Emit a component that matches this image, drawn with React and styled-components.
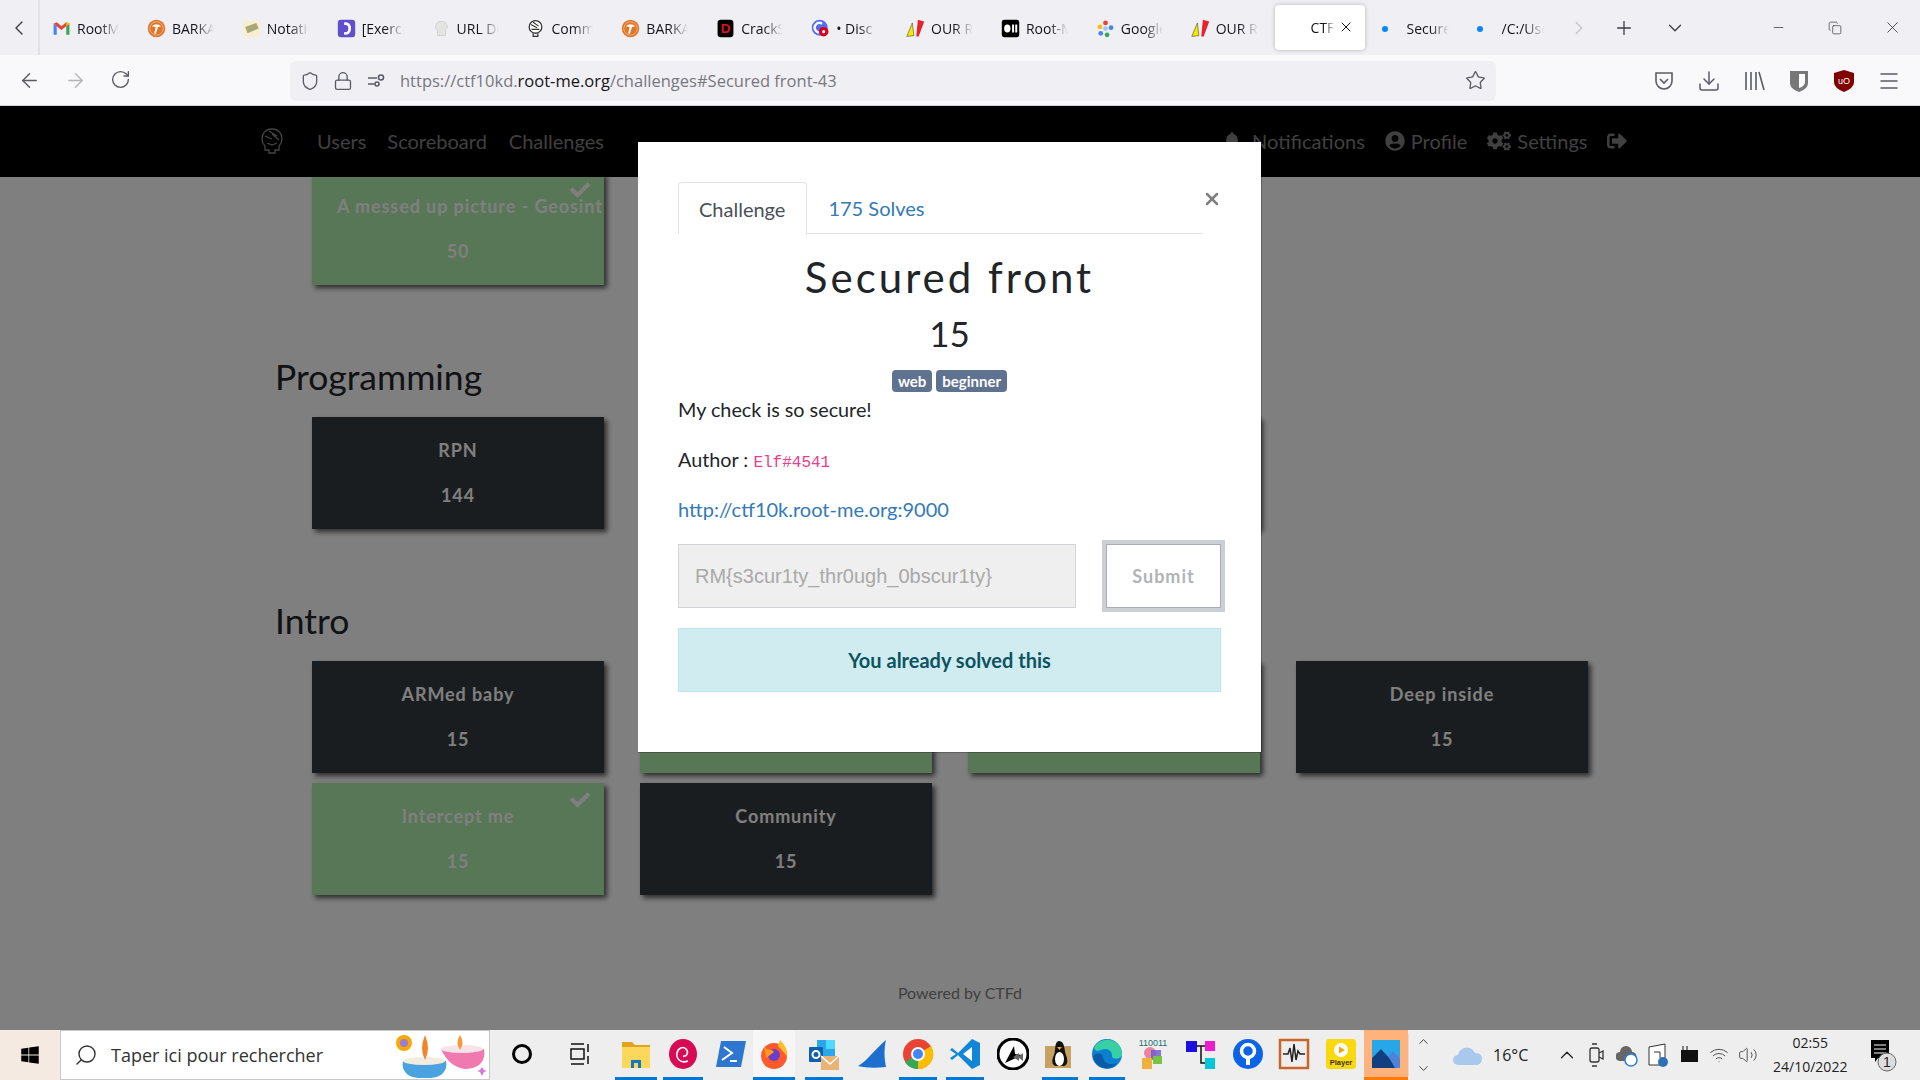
import React from 'react';
import styled, { createGlobalStyle } from 'styled-components';
import {
  ArrowLeft, ArrowRight, RotateCw, Shield, Lock, Star, Download, Menu, X, Plus,
  ChevronDown, ChevronLeft, ChevronRight, ChevronUp, Minus, Search, Copy, Volume2, Wifi,
} from 'lucide-react';
import { FaBell, FaUserCircle, FaCogs, FaSignOutAlt, FaCheck, FaWindows } from 'react-icons/fa';

const GlobalStyle = createGlobalStyle`
  html, body {
    margin: 0;
    padding: 0;
    overflow: hidden;
    background: #808080;
  }
  * { box-sizing: border-box; }
`;

const Screen = styled.div`
  width: 1920px;
  height: 1080px;
  display: flex;
  flex-direction: column;
  font-family: 'Open Sans', 'Liberation Sans', sans-serif;
`;

/* browser tabs */
const TabStrip = styled.div`
  height: 55px;
  flex: none;
  display: flex;
  align-items: center;
  background: #f0f0f4;
  color: #15141a;
`;

const StripButton = styled.div`
  flex: none;
  width: ${p => p.$w}px;
  display: flex;
  justify-content: center;
  align-items: center;
  color: ${p => p.$color || '#3a3a40'};
`;

const BackSlot = styled(StripButton)`
  height: 55px;
  border-right: 2px solid #e2e2e6;
  margin-right: 1px;
`;

const Tab = styled.div`
  flex: none;
  width: ${p => (p.$active ? 90 : p.$w || 94.9)}px;
  height: 45px;
  display: flex;
  align-items: center;
  gap: 6px;
  padding-left: ${p => (p.$active ? 36 : 11)}px;
  padding-top: ${p => (p.$active ? 0 : 2)}px;
  border-radius: 4px;
  position: relative;
  font-size: 14px;
  background: ${p => (p.$active ? '#fff' : 'transparent')};
  box-shadow: ${p => (p.$active ? '0 0 4px rgba(0,0,0,.25)' : 'none')};
`;

const TabLabel = styled.span`
  width: ${p => p.$w || 42}px;
  overflow: hidden;
  white-space: nowrap;
  mask-image: linear-gradient(to right, #000 55%, transparent 100%);
`;

const TabClose = styled(X)`
  position: absolute;
  right: 11px;
  top: 14px;
`;

const TabDot = styled.i`
  flex: none;
  width: 6px;
  height: 6px;
  margin: 0 13px 0 6px;
  border-radius: 50%;
  background: #0a84ff;
`;

const StripGap = styled.div`
  flex: ${p => (p.$grow ? 1 : 'none')};
  width: ${p => p.$w || 0}px;
`;

/* browser toolbar */
const Toolbar = styled.div`
  height: 51px;
  flex: none;
  display: flex;
  align-items: center;
  padding-top: 1px;
  background: #f9f9fb;
  border-bottom: 1px solid #d4d4d8;
  color: #5b5b66;
`;

const NavButtons = styled.div`
  width: 290px;
  flex: none;
  display: flex;
  gap: 23px;
  padding-left: 18px;
`;

const UrlBar = styled.div`
  width: 1206px;
  height: 40px;
  flex: none;
  display: flex;
  align-items: center;
  padding: 0 10px;
  border-radius: 6px;
  background: #f0f0f4;
`;

const UrlIcons = styled.div`
  display: flex;
  align-items: center;
  gap: 13px;
  margin-right: 14px;
`;

const UrlText = styled.div`
  flex: 1;
  font-size: 16.5px;
  white-space: nowrap;
  color: #77777f;

  b {
    font-weight: 400;
    color: #15141a;
  }
`;

const ToolIcons = styled.div`
  flex: 1;
  display: flex;
  justify-content: flex-end;
  align-items: center;
  gap: 21px;
  padding-right: 19px;
`;

/* the site below the modal */
const PageArea = styled.div`
  flex: 1;
  min-height: 0;
  position: relative;
  overflow: hidden;
  display: flex;
  flex-direction: column;
  background: #fff;
  font-family: Lato, 'Liberation Sans', sans-serif;
`;

const Navbar = styled.nav`
  height: 71px;
  flex: none;
  display: flex;
  align-items: center;
  padding: 0 0 2px 261px;
  background: #000;
  color: #808080;
  font-size: 20px;
`;

const NavLogo = styled.svg`
  width: 22px;
  height: 26px;
  margin-right: 34px;
`;

const NavLink = styled.span`
  display: flex;
  align-items: center;
  gap: 6px;
  margin-right: ${p => p.$gap ?? 21}px;
`;

const NavSpacer = styled.div`
  width: ${p => p.$w}px;
`;

const Scroller = styled.div`
  flex: 1;
  min-height: 0;
  overflow: hidden;
  padding-left: 275px;
`;

const CardGrid = styled.div`
  display: grid;
  grid-template-columns: repeat(4, 292px);
  column-gap: 36px;
  row-gap: 10px;
  padding-left: 37px;
  margin-top: ${p => p.$top || 0}px;
`;

const Heading = styled.h2`
  margin: 70px 0 19px;
  font-size: 35.5px;
  line-height: 43px;
  font-weight: 400;
  color: #212529;
`;

const Card = styled.div`
  height: 112px;
  position: relative;
  padding: 21px 25px 0;
  text-align: center;
  white-space: nowrap;
  font-size: 18px;
  font-weight: 700;
  letter-spacing: 0.9px;
  line-height: 24px;
  color: #fff;
  background: ${p => (p.$solved ? '#b0eeae' : '#343a40')};
  box-shadow: 3px 3px 5px rgba(0, 0, 0, 0.65);

  p {
    margin: 21px 0 0;
  }
`;

const CardCheck = styled(FaCheck)`
  position: absolute;
  top: 7px;
  right: 14px;
  width: 20px;
  height: 20px;
`;

const Footer = styled.div`
  margin: 86px 0 0 -275px;
  text-align: center;
  font-size: 16px;
  line-height: 24px;
  color: #808080;
`;

const Backdrop = styled.div`
  position: absolute;
  inset: 0;
  background: rgba(0, 0, 0, 0.5);
`;

const Modal = styled.div`
  position: absolute;
  left: 638px;
  top: 36px;
  width: 623px;
  height: 610px;
  padding: 40px 40px 0;
  background: #fff;
  color: #212529;
  font-size: 20px;
  box-shadow: 1px 0 0 rgba(0, 0, 0, 0.25), 0 1px 0 rgba(0, 0, 0, 0.25);
`;

const CloseButton = styled(X)`
  position: absolute;
  left: 564px;
  top: 47px;
  color: #7f7f7f;
`;

const ModalTabs = styled.div`
  width: 525px;
  height: 52px;
  display: flex;
  border-bottom: 1px solid #dee2e6;
`;

const ModalTab = styled.div`
  height: ${p => (p.$active ? 52 : 51)}px;
  padding: ${p => (p.$active ? '0 21px 0 20px' : '0 21px')};
  display: flex;
  align-items: center;
  color: ${p => (p.$active ? '#495057' : '#337ab7')};
  background: #fff;
  border: ${p => (p.$active ? '1px solid #dee2e6' : 'none')};
  border-bottom: none;
  border-radius: 4px 4px 0 0;
`;

const ChallengeName = styled.h3`
  margin: 19px 0 0;
  width: 543px;
  text-align: center;
  font-size: 42px;
  line-height: 49px;
  font-weight: 400;
  letter-spacing: 3px;
`;

const ChallengeValue = styled.div`
  margin-top: 7px;
  text-align: center;
  width: 543px;
  font-size: 35px;
  line-height: 48px;
`;

const Tags = styled.div`
  display: flex;
  justify-content: center;
  gap: 4px;
  margin-top: 13px;
`;

const Tag = styled.span`
  height: 22px;
  padding: 0 6px;
  border-radius: 4px;
  background: #5f7290;
  color: #fff;
  font-size: 15px;
  font-weight: 700;
  line-height: 22px;
`;

const Line = styled.p`
  margin: ${p => p.$top}px 0 0;
  font-size: 19.8px;
  line-height: 30px;
`;

const AuthorTag = styled.code`
  font-family: 'Liberation Mono', monospace;
  font-size: 16px;
  line-height: 1;
  color: #e83e8c;
`;

const Link = styled.a`
  color: #337ab7;
  font-size: 20px;
  text-decoration: none;
`;

const SubmitRow = styled.div`
  display: flex;
  gap: 30px;
  margin-top: 20px;
`;

const FlagInput = styled.input`
  width: 398px;
  height: 64px;
  padding: 0 16px;
  border: 1px solid #d3d4d7;
  border-radius: 0;
  background: #efefef;
  font-family: 'Liberation Sans', sans-serif;
  font-size: 20px;
  color: #a9a9a9;
`;

const SubmitButton = styled.button`
  width: 115px;
  height: 64px;
  margin-left: 0;
  padding-bottom: 2px;
  border: 1px solid #a8adb3;
  background: #fff;
  outline: 4px solid #ccd0d5;
  font-family: Lato, sans-serif;
  font-size: 18px;
  font-weight: 700;
  letter-spacing: 1px;
  color: #b1b3b5;
`;

const Notice = styled.div`
  width: 543px;
  height: 64px;
  margin-top: 20px;
  display: flex;
  justify-content: center;
  align-items: center;
  border: 1px solid #bee5eb;
  background: #d1ecf1;
  color: #0c5460;
  font-weight: 700;
`;

/* windows taskbar */
const Taskbar = styled.div`
  height: 50px;
  flex: none;
  display: flex;
  align-items: stretch;
  background: #eeeeee;
  color: #111;
`;

const StartButton = styled.div`
  width: 60px;
  flex: none;
  display: flex;
  justify-content: center;
  align-items: center;
  background: #f4eae1;
`;

const SearchBox = styled.div`
  width: 430px;
  flex: none;
  display: flex;
  align-items: center;
  gap: 13px;
  padding-left: 13px;
  background: #fff;
  border: 1px solid #c8c8c8;
  font-size: 18px;
  color: #333;
  position: relative;
`;

const SearchArt = styled.svg`
  position: absolute;
  right: 0;
  top: 2px;
  width: 98px;
  height: 46px;
`;

const AppSlot = styled.div`
  flex: none;
  width: ${p => p.$w || 44}px;
  margin-left: ${p => p.$gap || 0}px;
  display: flex;
  justify-content: center;
  align-items: center;
  background: ${p => (p.$bg ? p.$bg : 'transparent')};
  border-bottom: 3px solid ${p => p.$line || 'transparent'};
`;

const Tray = styled.div`
  flex: 1;
  display: flex;
  align-items: center;
  font-size: 16px;
  color: #222;
`;

const ScrollArrows = styled.div`
  width: 30px;
  display: flex;
  flex-direction: column;
  align-items: center;
  gap: 12px;
  border-left: 1px solid #ddd;
  color: #444;
`;

const TrayIcon = styled.span`
  display: flex;
  margin-left: ${p => p.$gap || 11}px;
`;

const Clock = styled.div`
  width: 80px;
  margin-left: 12px;
  text-align: center;
  font-size: 14px;
  line-height: 24px;
`;

const Favicon = ({ name }) => {
  const art = {
    gmail: <><path d="M2 20V6l4 3v11z" fill="#4285f4" /><path d="M22 20V6l-4 3v11z" fill="#34a853" /><path d="M2 6l10 8 10-8-4-2-6 5-6-5z" fill="#ea4335" /><path d="M18 9l4-3v-1l-4-1z" fill="#fbbc04" /></>,
    bark: <><circle cx="12" cy="12" r="11" fill="#e0762a" /><circle cx="12" cy="12" r="8.5" fill="none" stroke="#f5c08e" /><path d="M6 9q6-5 12 0l-4 1-3 9-2-1 2-8z" fill="#fff" /></>,
    note: <><rect x="1" y="2" width="22" height="20" fill="#f7f0d0" /><path d="M4 10l14-5 3 7-14 6z" fill="#a6a878" /></>,
    exercism: <><rect x="1" y="1" width="22" height="22" rx="4" fill="#604fcd" /><path d="M9 6q7-1 7 6t-7 6" fill="none" stroke="#fff" strokeWidth="3.5" /></>,
    chef: <path d="M7 14C2 10 5 3 12 3s10 7 5 11v7H7z" fill="#e4e4e4" stroke="#ccc" />,
    skull: <><circle cx="12" cy="10" r="8" fill="#fff" stroke="#333" strokeWidth="1.6" /><path d="M6 7l8 4M9 4l7 5M7 13h10M9 18v4h6v-4" fill="none" stroke="#333" strokeWidth="1.5" /></>,
    crack: <><rect x="2" y="1" width="20" height="22" rx="4" fill="#000" /><text x="12" y="18" textAnchor="middle" fontSize="17" fontWeight="700" fontFamily="Liberation Sans" fill="#e0101a">D</text></>,
    discord: <><circle cx="11" cy="11" r="10" fill="#4f6ef0" /><path d="M14 6a6 6 0 100 10" fill="none" stroke="#fff" strokeWidth="3" /><circle cx="16" cy="16" r="6" fill="#d8001c" /><circle cx="16" cy="16" r="2" fill="#fff" /></>,
    our: <><path d="M1 22L8 5l2 16z" fill="#f8e800" stroke="#222" strokeWidth=".6" /><path d="M13 22l2-21 8 2-7 19z" fill="#e8222a" /></>,
    root: <><rect x="1" y="1" width="22" height="22" rx="3" fill="#000" /><ellipse cx="8" cy="12" rx="4" ry="5" fill="#fff" /><rect x="14" y="7" width="2.5" height="10" fill="#fff" /><rect x="18" y="7" width="2.5" height="10" fill="#fff" /></>,
    lens: <><circle cx="12" cy="5" r="3" fill="#ea4335" /><circle cx="5" cy="10" r="3" fill="#fbbc04" /><circle cx="6" cy="18" r="3" fill="#4285f4" /><circle cx="14" cy="20" r="3" fill="#34a853" /><circle cx="19" cy="11" r="3" fill="#4285f4" /><circle cx="12" cy="12" r="3" fill="#a3c4f3" /></>,
  };
  return <svg width="19" height="19" viewBox="0 0 24 24" style={{ flex: 'none' }}>{art[name]}</svg>;
};

const AppIcon = ({ name }) => {
  const art = {
    folder: <><path d="M2 4h10l3 3h15v6H2z" fill="#e2a21b" /><rect x="2" y="9" width="28" height="21" fill="#fbd75b" /><path d="M11 30v-8h10v8h-3v-5h-4v5z" fill="#1478c8" /></>,
    debian: <><ellipse cx="16" cy="16" rx="14" ry="15" fill="#d70a53" /><path d="M21 23c-8 3-12-3-11-8s6-7 9-4 1 8-3 7" fill="none" stroke="#fff" strokeWidth="1.6" /></>,
    shell: <><path d="M6 3h25l-5 26H1z" fill="#2e77d0" /><path d="M9 9l8 6-10 7M15 23h7" fill="none" stroke="#fff" strokeWidth="2" /></>,
    firefox: <><circle cx="16" cy="18" r="13" fill="#ff5a2c" /><path d="M22 2c5 5 8 10 7 16L20 8z" fill="#ffbd2e" /><circle cx="16" cy="17" r="6" fill="#6a3ec8" /><path d="M6 8c3 6 8 2 10 6l-8 6z" fill="#ff9a1f" /></>,
    outlook: <><rect x="9" y="2" width="18" height="18" fill="#28a8ea" /><rect x="18" y="2" width="9" height="9" fill="#50d9ff" /><rect x="1" y="9" width="14" height="15" rx="1" fill="#0f5fb0" /><circle cx="8" cy="16.500" r="3.500" fill="none" stroke="#fff" strokeWidth="2" /><rect x="13" y="18" width="18" height="14" fill="#e9b376" /><path d="M13 18l9 8 9-8" fill="none" stroke="#fff" strokeWidth="1.500" /></>,
    shark: <path d="M2 28C10 24 20 10 30 2c-2 8-2 18 0 27C20 30 10 30 2 28z" fill="#1c6fce" />,
    chrome: <><circle cx="16" cy="16" r="15" fill="#ea4335" /><path d="M16 16L3 24a15 15 0 0013 7z" fill="#34a853" /><path d="M16 16l13-8a15 15 0 01-13 23z" fill="#fbbc04" /><circle cx="16" cy="16" r="7" fill="#fff" /><circle cx="16" cy="16" r="5" fill="#4285f4" /></>,
    vscode: <><path d="M23 1l8 4v22l-8 4L9 17 3 22l-2-2 6-4-6-4 2-2 6 5z" fill="#0f86d8" /><path d="M23 9v14l-9-7z" fill="#fff" /></>,
    stremio: <><circle cx="16" cy="16" r="15" fill="#fff" stroke="#000" strokeWidth="3" /><path d="M8 25l9-17 1 8 7 1z" fill="#000" /><path d="M16 19l6-4v8zM21 19l5-4v8z" fill="#666" /></>,
    linux: <><rect x="1" y="8" width="26" height="22" fill="#c6a15f" /><path d="M15 3c6 0 5 9 7 14s2 10-2 11h-8c-5-1-4-7-2-11s0-14 5-14z" fill="#111" /><ellipse cx="15.500" cy="21" rx="4.500" ry="7" fill="#fff" /><path d="M13 9h5l-2.500 3z" fill="#f5a623" /></>,
    edge: <><circle cx="16" cy="16" r="15" fill="#0c7fd0" /><path d="M3 10C8-2 30-2 31 16c0 5-8 6-10 3 1-6-5-10-11-7-3 1-5 2-7-2z" fill="#37d0a4" /><path d="M12 20c1 5 8 8 14 5-6 9-22 6-24-6 2-4 9-6 10 1z" fill="#0a5ca8" /></>,
    binary: <><text x="16" y="8" textAnchor="middle" fontSize="9" fontFamily="Liberation Sans" fill="#1c6d6d">110011</text><circle cx="13" cy="15" r="6" fill="#e884a0" /><rect x="14" y="12" width="10" height="10" fill="#6a5acd" opacity=".8" /><rect x="5" y="20" width="10" height="11" fill="#f0b040" /><rect x="16" y="18" width="9" height="8" fill="#76c442" /></>,
    diagram: <><rect x="2" y="3" width="11" height="11" fill="#1a10e0" /><rect x="21" y="3" width="10" height="10" fill="#f01ad0" /><rect x="21" y="20" width="10" height="11" fill="#00c8d8" /><path d="M13 8h8M17 8v17h4" fill="none" stroke="#111" strokeWidth="1.500" /></>,
    pin: <><circle cx="16" cy="16" r="15" fill="#0b63e5" /><circle cx="16" cy="13" r="6.500" fill="none" stroke="#fff" strokeWidth="3.500" /><path d="M14 19h4v8h-4z" fill="#fff" /></>,
    wave: <><rect x="2" y="2" width="28" height="28" fill="#eee" stroke="#c9652a" strokeWidth="2.500" /><path d="M5 16h5l2-6 2 14 2-18 2 16 2-9 2 3h5" fill="none" stroke="#222" strokeWidth="1.500" /></>,
    player: <><rect x="1" y="1" width="30" height="30" rx="3" fill="#fcd90f" /><circle cx="16" cy="12" r="7" fill="#fff" /><path d="M14 8.500l6 3.500-6 3.500z" fill="#f2a900" /><text x="16" y="27" textAnchor="middle" fontSize="7.500" fontWeight="700" fontFamily="Liberation Sans" fill="#333">Player</text></>,
    photos: <><rect x="2" y="2" width="28" height="28" fill="#27a7e7" /><path d="M2 30V20l9-9 10 11 9 8z" fill="#123f80" /><path d="M18 18l5-5 7 8v9h-5z" fill="#4f82d8" /></>,
  };
  return <svg width="32" height="32" viewBox="0 0 32 32">{art[name]}</svg>;
};

const tabs = [
  ['gmail', 'RootMe'], ['bark', 'BARKA'], ['note', 'Notation'], ['exercism', '[Exercice'],
  ['chef', 'URL Dec'], ['skull', 'Comm'], ['bark', 'BARKA'], ['crack', 'CrackS'],
  ['discord', '• Disc'], ['our', 'OUR R'], ['root', 'Root-M'], ['lens', 'Google'], ['our', 'OUR R'],
];

const apps = [
  ['folder', 42, 9, '#0078d7'], ['debian', 40, 6, '#0078d7'], ['shell', 40, 8], ['firefox', 42, 2, '#0078d7', '#f6f6f6'],
  ['outlook', 38, 10, '#0078d7'], ['shark', 40, 9], ['chrome', 38, 7, '#0078d7'], ['vscode', 38, 9, '#0078d7'],
  ['stremio', 40, 9], ['linux', 36, 9, '#0078d7'], ['edge', 36, 11, '#0078d7'], ['binary', 40, 8],
  ['diagram', 40, 7], ['pin', 40, 8], ['wave', 40, 6], ['player', 40, 7],
];

const solved = { $solved: true };

export default function App() {
  return (
    <Screen>
      <GlobalStyle />
      <TabStrip>
        <BackSlot $w={40}><ChevronLeft size={24} strokeWidth={1.4} /></BackSlot>
        {tabs.map(([icon, label], i) => (
          <Tab key={i}>
            <Favicon name={icon} />
            <TabLabel>{label}</TabLabel>
          </Tab>
        ))}
        <Tab $active>
          <TabLabel $w={24}>CTF</TabLabel>
          <TabClose size={16} strokeWidth={1.5} />
        </Tab>
        <Tab $w={95}><TabDot /><TabLabel>Secure</TabLabel></Tab>
        <Tab $w={94}><TabDot /><TabLabel>/C:/Users</TabLabel></Tab>
        <StripGap $w={11} />
        <StripButton $w={28} $color="#c4c4c8"><ChevronRight size={22} strokeWidth={1.4} /></StripButton>
        <StripGap $w={19} />
        <StripButton $w={24}><Plus size={22} strokeWidth={1.4} /></StripButton>
        <StripGap $w={27} />
        <StripButton $w={24}><ChevronDown size={22} strokeWidth={1.4} /></StripButton>
        <StripGap $grow />
        <StripButton $w={22}><Minus size={15} strokeWidth={1.2} /></StripButton>
        <StripGap $w={35} />
        <StripButton $w={22}><Copy size={14} strokeWidth={1.2} /></StripButton>
        <StripGap $w={35} />
        <StripButton $w={22}><X size={19} strokeWidth={1.1} /></StripButton>
        <StripGap $w={17} />
      </TabStrip>

      <Toolbar>
        <NavButtons>
          <ArrowLeft size={23} strokeWidth={1.5} />
          <ArrowRight size={23} strokeWidth={1.5} color="#b5b5b9" />
          <RotateCw size={21} strokeWidth={1.6} />
        </NavButtons>
        <UrlBar>
          <UrlIcons>
            <Shield size={20} strokeWidth={1.6} />
            <Lock size={20} strokeWidth={1.6} />
            <svg width="20" height="20" viewBox="0 0 20 20" fill="none" stroke="#5b5b66" strokeWidth="1.600">
              <path d="M2 7h9M2 13h6" /><circle cx="15" cy="6.500" r="2.500" /><circle cx="11" cy="13" r="2" />
            </svg>
          </UrlIcons>
          <UrlText>https://ctf10kd.<b>root-me.org</b>/challenges#Secured front-43</UrlText>
          <Star size={21} strokeWidth={1.5} />
        </UrlBar>
        <ToolIcons>
          <svg width="24" height="24" viewBox="0 0 24 24" fill="none" stroke="#5b5b66" strokeWidth="1.600">
            <path d="M4 4h16v8a8 8 0 01-16 0z" /><path d="M8 10l4 4 4-4" />
          </svg>
          <Download size={24} strokeWidth={1.5} />
          <svg width="24" height="24" viewBox="0 0 24 24" fill="none" stroke="#5b5b66" strokeWidth="1.600">
            <path d="M4 3v18M9 3v18M14 3v18M17 3l5 18" />
          </svg>
          <svg width="24" height="24" viewBox="0 0 24 24">
            <path d="M3 2h18v12q0 6-9 9-9-3-9-9z" fill="#777" /><path d="M12 5h6v8q0 4-6 6z" fill="#fff" />
          </svg>
          <svg width="24" height="24" viewBox="0 0 24 24">
            <path d="M12 1l10 3v9q0 6-10 10Q2 19 2 13V4z" fill="#800000" />
            <text x="12" y="15" textAnchor="middle" fontSize="9" fontFamily="Liberation Sans" fill="#fff">uO</text>
          </svg>
          <Menu size={24} strokeWidth={1.5} />
        </ToolIcons>
      </Toolbar>

      <PageArea>
        <Navbar>
          <NavLogo viewBox="0 0 22 26" fill="none" stroke="#8a8a8a" strokeWidth="1.300">
            <path d="M11 1C4 1 1 6 1 11c0 4 2 6 3 7v4h4v3h6v-3h4v-4c1-1 3-3 3-7 0-5-3-10-10-10z" />
            <path d="M4 8l7 3M8 3l8 5M11 6l7 6M6 15l5 2 5-2" />
          </NavLogo>
          <NavLink>Users</NavLink>
          <NavLink $gap={22}>Scoreboard</NavLink>
          <NavLink>Challenges</NavLink>
          <NavSpacer $w={598} />
          <NavLink $gap={20}><FaBell size={18} />&nbsp;Notifications</NavLink>
          <NavLink $gap={20}><FaUserCircle size={20} />Profile</NavLink>
          <NavLink $gap={20}><FaCogs size={24} />Settings</NavLink>
          <NavLink><FaSignOutAlt size={20} /></NavLink>
        </Navbar>
        <Scroller>
          <CardGrid $top={-4}>
            <Card {...solved}>
              <CardCheck />
              A messed up picture - Geosint
              <p>50</p>
            </Card>
          </CardGrid>

          <Heading>Programming</Heading>
          <CardGrid>
            <Card>RPN<p>144</p></Card>
            <Card />
            <Card />
          </CardGrid>

          <Heading>Intro</Heading>
          <CardGrid>
            <Card>ARMed baby<p>15</p></Card>
            <Card {...solved} />
            <Card {...solved} />
            <Card>Deep inside<p>15</p></Card>
            <Card {...solved}>
              <CardCheck />
              Intercept me
              <p>15</p>
            </Card>
            <Card>Community<p>15</p></Card>
          </CardGrid>

          <Footer>Powered by CTFd</Footer>
        </Scroller>

        <Backdrop />
        <Modal>
          <CloseButton size={20} strokeWidth={3} />
          <ModalTabs>
            <ModalTab $active>Challenge</ModalTab>
            <ModalTab>175 Solves</ModalTab>
          </ModalTabs>
          <ChallengeName>Secured front</ChallengeName>
          <ChallengeValue>15</ChallengeValue>
          <Tags>
            <Tag>web</Tag>
            <Tag>beginner</Tag>
          </Tags>
          <Line $top={2}>My check is so secure!</Line>
          <Line $top={20}>Author : <AuthorTag>Elf#4541</AuthorTag></Line>
          <Line $top={20}><Link href="#">http://ctf10k.root-me.org:9000</Link></Line>
          <SubmitRow>
            <FlagInput readOnly value="RM{s3cur1ty_thr0ugh_0bscur1ty}" />
            <SubmitButton>Submit</SubmitButton>
          </SubmitRow>
          <Notice>You already solved this</Notice>
        </Modal>
      </PageArea>

      <Taskbar>
        <StartButton><FaWindows size={20} color="#000" /></StartButton>
        <SearchBox>
          <Search size={24} strokeWidth={1.4} style={{ transform: 'scaleX(-1)' }} />
          Taper ici pour rechercher
          <SearchArt viewBox="0 0 98 46">
            <circle cx="13" cy="10" r="8" fill="#f7a900" /><circle cx="13" cy="10" r="4" fill="#9b7bd8" />
            <path d="M50 16h43q2 10-5 16-6 4-14 4-16-2-24-20z" fill="#f07ab0" />
            <ellipse cx="71" cy="16" rx="21" ry="4" fill="#f9e3ea" />
            <path d="M69 2q-5 8 0 15 5-7 0-15z" fill="#f59a3c" />
            <path d="M12 28h43q2 8-5 14-5 3-10 3h-13q-5 0-10-3-7-6-5-14z" fill="#4aa3de" />
            <ellipse cx="33" cy="28" rx="21" ry="4" fill="#f1ecdf" />
            <path d="M34 2q-6 14 0 25 6-11 0-25z" fill="#f5832a" />
            <path d="M91 34l2 3 3 1-3 1-2 4-2-4-3-1 3-1z" fill="#d877e0" />
          </SearchArt>
        </SearchBox>
        <AppSlot $w={52} $gap={6}><svg width="26" height="26"><circle cx="13" cy="13" r="8.500" fill="none" stroke="#000" strokeWidth="3" /></svg></AppSlot>
        <AppSlot $w={52} $gap={6}>
          <svg width="22" height="24" viewBox="0 0 22 24" fill="none" stroke="#111" strokeWidth="1.500">
            <rect x="2" y="7" width="13" height="10" /><path d="M2 2h13M2 22h13M19 2v8M19 14v8" />
          </svg>
        </AppSlot>
        {apps.map(([name, w, gap, line, bg]) => (
          <AppSlot key={name} $w={w} $gap={gap} $line={line} $bg={bg}><AppIcon name={name} /></AppSlot>
        ))}
        <AppSlot $w={44} $gap={3} $line="#ff7a00" $bg="#ffb27c"><AppIcon name="photos" /></AppSlot>
        <Tray>
          <ScrollArrows>
            <ChevronUp size={15} strokeWidth={1.6} />
            <ChevronDown size={15} strokeWidth={1.6} />
          </ScrollArrows>
          <svg width="32" height="24" viewBox="0 0 32 24" style={{ marginLeft: 14 }}>
            <path d="M6 22a5 5 0 010-10 9 9 0 0117-2 6 6 0 012 12z" fill="#a8c8ee" />
          </svg>
          <span style={{ marginLeft: 9 }}>16°C</span>
          <TrayIcon $gap={28}><ChevronUp size={22} strokeWidth={1.4} /></TrayIcon>
          <TrayIcon $gap={9}><svg width="18" height="26" viewBox="0 0 18 26" fill="none" stroke="#333" strokeWidth="1.300"><rect x="3" y="6" width="9" height="14" rx="2" /><path d="M12 11l4-2v8l-4-2M5 2h5M5 24h5" /></svg></TrayIcon>
          <TrayIcon $gap={11}><svg width="22" height="24" viewBox="0 0 22 24"><path d="M4 18a4 4 0 010-9 6 6 0 0112 0 4 4 0 010 9z" fill="#666" /><circle cx="15" cy="17" r="6" fill="#fff" stroke="#2f7fd0" strokeWidth="1.500" /></svg></TrayIcon>
          <TrayIcon $gap={9}><svg width="22" height="26" viewBox="0 0 22 26"><path d="M2 5l16-3v21H2z" fill="#fff" stroke="#333" /><circle cx="16" cy="20" r="5" fill="#2f6fb5" /><path d="M7 10h6v6" fill="none" stroke="#333" /></svg></TrayIcon>
          <TrayIcon $gap={9}><svg width="22" height="18" viewBox="0 0 22 18"><rect x="3" y="4" width="17" height="12" fill="#111" /><path d="M5 0v4M9 0v4" stroke="#111" /></svg></TrayIcon>
          <TrayIcon $gap={9}><Wifi size={20} strokeWidth={1.2} color="#555" /></TrayIcon>
          <TrayIcon $gap={9}><Volume2 size={20} strokeWidth={1.2} color="#555" /></TrayIcon>
          <Clock>02:55<br />24/10/2022</Clock>
          <TrayIcon $gap={19}>
            <svg width="30" height="34" viewBox="0 0 30 34">
              <path d="M2 2h18v18H9l-3 4v-4H2z" fill="#000" />
              <path d="M5 7h12M5 11h12M5 15h12" stroke="#fff" />
              <circle cx="18" cy="24" r="9" fill="#ddd" stroke="#666" />
              <text x="18" y="29" textAnchor="middle" fontSize="14" fontFamily="Liberation Sans" fill="#222">1</text>
            </svg>
          </TrayIcon>
        </Tray>
      </Taskbar>
    </Screen>
  );
}
